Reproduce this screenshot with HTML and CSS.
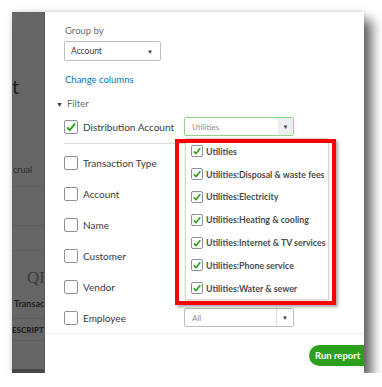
FILE: index.html
```html
<!DOCTYPE html>
<html lang="en">
<head>
  <meta charset="UTF-8" />
  <title>Customize report - Filter</title>
  <link rel="stylesheet" href="styles.css">
</head>
<body>
  <div class="frame">
    <div class="backdrop">
      <div class="bg-title">t</div>
      <div class="bg-basis">crual</div>
      <div class="bg-line l0"></div>
      <div class="bg-line l1"></div>
      <div class="bg-line l2"></div>
      <div class="bg-line l3"></div>
      <div class="bg-line l4"></div>
      <div class="bg-logo">QB</div>
      <div class="bg-sub">Transac</div>
      <div class="bg-head">ESCRIPTIC</div>
      <div class="bg-foot"></div>
    </div>

    <div class="panel">
      <div class="body">
        <div class="label">Group by</div>
        <div class="select small">
          <span>Account</span>
          <span class="caret">&#9660;</span>
        </div>
        <a class="link" href="#">Change columns</a>

        <div class="section"><span class="tri">&#9660;</span>Filter</div>

        <div class="row first">
          <span class="check"><svg viewBox="0 0 12 12"><path d="M2.2 6.4 L4.8 9 L10 2.6" /></svg></span>
          <span class="name">Distribution Account</span>
          <div class="select wide active">
            <span>Utilities</span>
            <span class="btn">&#9660;</span>
          </div>
        </div>
        <div class="row"><span class="check"></span><span class="name">Transaction Type</span></div>
        <div class="row"><span class="check"></span><span class="name">Account</span></div>
        <div class="row"><span class="check"></span><span class="name">Name</span></div>
        <div class="row"><span class="check"></span><span class="name">Customer</span></div>
        <div class="row"><span class="check"></span><span class="name">Vendor</span></div>
        <div class="row">
          <span class="check"></span>
          <span class="name">Employee</span>
          <div class="select wide">
            <span>All</span>
            <span class="btn plain">&#9660;</span>
          </div>
        </div>
      </div>

      <div class="footer">
        <button class="run">Run report</button>
      </div>

      <ul class="menu">
        <li><span class="mini"><svg viewBox="0 0 12 12"><path d="M2.2 6.4 L4.8 9 L10 2.6" /></svg></span>Utilities</li>
        <li><span class="mini"><svg viewBox="0 0 12 12"><path d="M2.2 6.4 L4.8 9 L10 2.6" /></svg></span>Utilities:Disposal &amp; waste fees</li>
        <li><span class="mini"><svg viewBox="0 0 12 12"><path d="M2.2 6.4 L4.8 9 L10 2.6" /></svg></span>Utilities:Electricity</li>
        <li><span class="mini"><svg viewBox="0 0 12 12"><path d="M2.2 6.4 L4.8 9 L10 2.6" /></svg></span>Utilities:Heating &amp; cooling</li>
        <li><span class="mini"><svg viewBox="0 0 12 12"><path d="M2.2 6.4 L4.8 9 L10 2.6" /></svg></span>Utilities:Internet &amp; TV services</li>
        <li><span class="mini"><svg viewBox="0 0 12 12"><path d="M2.2 6.4 L4.8 9 L10 2.6" /></svg></span>Utilities:Phone service</li>
        <li><span class="mini"><svg viewBox="0 0 12 12"><path d="M2.2 6.4 L4.8 9 L10 2.6" /></svg></span>Utilities:Water &amp; sewer</li>
      </ul>
      <div class="highlight"></div>
    </div>
  </div>
</body>
</html>
```

FILE: styles.css
```css
* {
  box-sizing: border-box;
}

body {
  margin: 0;
  background: #ffffff;
  font-family: Lato, "Open Sans", Arial, sans-serif;
  color: #393a3d;
}

.frame {
  display: flex;
  width: 352px;
  height: 361px;
  margin: 12px 0 0 12px;
  box-shadow: 8px 8px 11px rgba(0, 0, 0, 0.6), 0 0 5px rgba(0, 0, 0, 0.15);
}

/* page behind the modal, dimmed */
.backdrop {
  position: relative;
  width: 33px;
  background: #666666;
  border-right: 1px solid #5c5c5c;
  overflow: hidden;
  color: #1f1f1f;
}

.bg-title {
  position: absolute;
  left: 0;
  top: 62px;
  font-size: 20px;
}

.bg-basis {
  position: absolute;
  left: 1px;
  top: 152px;
  font-size: 9px;
  color: #2a2a2a;
}

.bg-line {
  position: absolute;
  left: 0;
  right: 0;
  height: 1px;
  background: #5f5f5f;
}

.l0 { top: 174px; }
.l1 { top: 213px; }
.l2 { top: 238px; }
.l3 { top: 306px; }
.l4 { top: 328px; }

.bg-logo {
  position: absolute;
  left: 15px;
  top: 256px;
  font-family: "Liberation Serif", serif;
  font-size: 17px;
  color: #3a3a3a;
}

.bg-sub {
  position: absolute;
  left: 2px;
  top: 286px;
  font-size: 9px;
  font-weight: bold;
}

.bg-head {
  position: absolute;
  left: 0;
  top: 313px;
  font-size: 8px;
  font-weight: 900;
}

.bg-foot {
  position: absolute;
  left: 0;
  right: 0;
  bottom: 0;
  height: 4px;
  background: #474747;
}

.panel {
  position: relative;
  flex: 1;
  display: flex;
  flex-direction: column;
  background: #ffffff;
  overflow: hidden;
}

.body {
  flex: 1;
  padding: 13px 0 0 19px;
  border-bottom: 1px solid #eceef1;
}

.label {
  font-size: 9.5px;
  color: #6b6c72;
  margin-left: 1px;
  height: 16px;
}

.select {
  display: flex;
  align-items: center;
  justify-content: space-between;
  border: 1px solid #babec5;
  border-radius: 2px;
  font-size: 8.5px;
  color: #393a3d;
}

.select.small {
  width: 97px;
  height: 20px;
  padding: 0 7px 0 6px;
}

.caret {
  font-size: 6px;
}

.link {
  display: block;
  margin: 13px 0 0 1px;
  font-size: 9.5px;
  color: #0077c5;
  text-decoration: none;
}

.section {
  display: flex;
  align-items: center;
  margin: 13px 0 0 -8px;
  font-size: 9.5px;
  color: #6b6c72;
}

.tri {
  font-size: 7px;
  color: #393a3d;
  margin-right: 4px;
}

.row {
  display: flex;
  align-items: center;
  height: 31px;
}

.row.first {
  height: 34px;
  margin-top: 1px;
  margin-bottom: 3px;
  margin-right: 70px;
  border-bottom: 1px solid #dcdee2;
}

.check {
  width: 14px;
  height: 14px;
  border: 1px solid #8d9096;
  border-radius: 2px;
  background: #fff;
  flex-shrink: 0;
}

.check svg,
.mini svg {
  display: block;
  width: 100%;
  height: 100%;
  fill: none;
  stroke: #2ca01c;
  stroke-width: 1.9;
}

.name {
  width: 101px;
  margin-left: 5px;
  font-size: 10px;
  color: #393a3d;
  white-space: nowrap;
}

.select.wide {
  width: 110px;
  height: 19px;
  padding-left: 7px;
  color: #8d9096;
  font-size: 8px;
}

.select.active {
  border: 1px solid #93d28a;
}

.btn {
  display: flex;
  align-items: center;
  justify-content: center;
  width: 15px;
  height: 17px;
  background: #eceef1;
  color: #393a3d;
  font-size: 6px;
}

.btn.plain {
  background: #fff;
  border-left: 1px solid #dcdee2;
  width: 17px;
}

.footer {
  display: flex;
  justify-content: flex-end;
  align-items: flex-start;
  height: 40px;
  padding-top: 11px;
}

.run {
  width: 64px;
  height: 21px;
  margin-right: -9px;
  padding: 0 0 0 6px;
  border: none;
  border-radius: 11px;
  background: #2ca01c;
  color: #ffffff;
  font-family: Lato, Arial, sans-serif;
  font-size: 9.5px;
  font-weight: bold;
  text-align: left;
}

/* open dropdown of the Utilities select */
.menu {
  position: absolute;
  left: 140px;
  top: 126px;
  width: 144px;
  height: 162px;
  margin: 0;
  padding: 1px 0 0 5px;
  list-style: none;
  background: #ffffff;
  border: 1px solid #d4d7dc;
  box-shadow: 0 1px 3px rgba(0, 0, 0, 0.15);
}

.menu li {
  display: flex;
  align-items: center;
  height: 22.8px;
  font-size: 8.8px;
  font-weight: bold;
  color: #4a4b4f;
  white-space: nowrap;
}

.mini {
  flex-shrink: 0;
  width: 12px;
  height: 12px;
  margin-right: 3px;
  border: 1px solid #8d9096;
  border-radius: 2px;
}

/* red annotation box */
.highlight {
  position: absolute;
  left: 130px;
  top: 127px;
  width: 161px;
  height: 166px;
  border: 4px solid #ff0000;
  box-shadow: 2px 2px 3px rgba(0, 0, 0, 0.35);
}
```
